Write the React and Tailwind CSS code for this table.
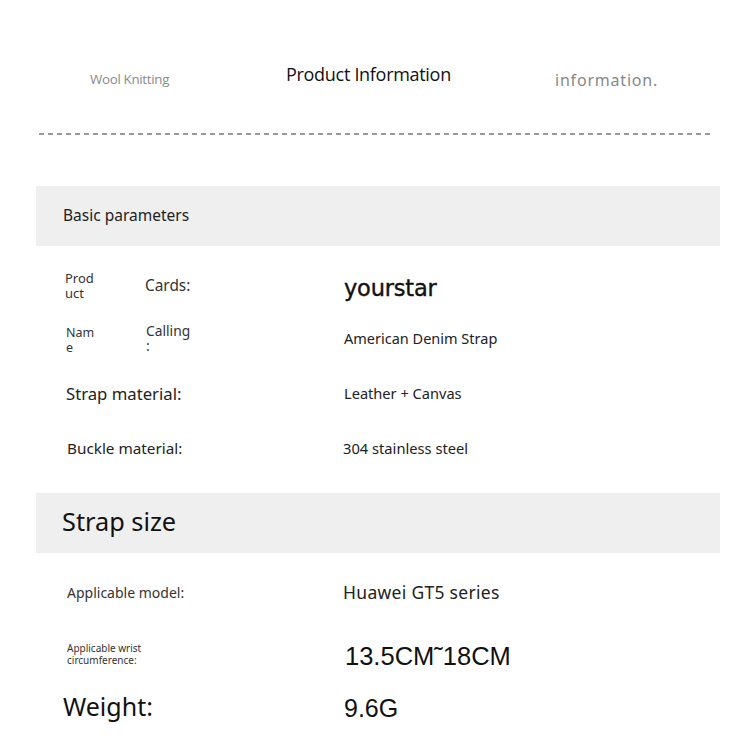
export default function App() {
  const sans = { fontFamily: '"Noto Sans", "Open Sans", sans-serif' };
  const arial = { fontFamily: '"Liberation Sans", Arial, sans-serif' };
  return (
    <div className="w-[750px] h-[739px] bg-white overflow-hidden text-[#222]" style={sans}>
      {/* header */}
      <div className="h-[186px] flex flex-col">
        <div className="flex pl-[90px] pt-[62px] h-[110px]">
          <div className="w-[196px] pt-[8px] text-[13.3px] text-[#8a8a8a] leading-[18px]" style={{ fontFamily: '"Open Sans", sans-serif', letterSpacing: '-0.3px' }}>Wool Knitting</div>
          <div className="w-[269px] text-[18px] text-[#111] leading-[24px]" style={{ fontFamily: '"Open Sans", sans-serif', letterSpacing: '-0.3px' }}>Product Information</div>
          <div className="pt-[8px] text-[16px] text-[#888] leading-[20px] tracking-[0.8px]">information.</div>
        </div>
        <div className="ml-[39px] mt-[23px] w-[673px] h-[2px] bg-[repeating-linear-gradient(90deg,#9a9a9a_0_5px,transparent_5px_9px)]" />
      </div>

      {/* Basic parameters */}
      <div className="ml-[36px] w-[684px] h-[60px] bg-[#efefef] flex items-center pl-[27px] text-[15.5px] text-[#222]">Basic parameters</div>

      <div className="ml-[36px] w-[684px]">
        <div className="h-[66px] flex items-center pt-[16px]">
          <div className="w-[109px] pl-[29px] text-[13px] leading-[15px] text-[#333] -mt-[2px]">Prod<br />uct</div>
          <div className="w-[199px] text-[15.4px] text-[#333] -mt-[2px]">Cards:</div>
          <div className="text-[22.5px] text-[#111] pt-[4px]" style={{ fontFamily: '"DejaVu Sans", sans-serif', letterSpacing: '-0.2px', WebkitTextStroke: '0.4px #111' }}>yourstar</div>
        </div>

        <div className="h-[54px] flex items-center">
          <div className="w-[110px] pl-[30px] text-[12.5px] leading-[15px] text-[#333] pt-[2px]">Nam<br />e</div>
          <div className="w-[198px] text-[13.8px] leading-[15px] text-[#333] -mt-[2px]">Calling<br />:</div>
          <div className="text-[14.5px] text-[#222]">American Denim Strap</div>
        </div>

        <div className="h-[56px] flex items-center">
          <div className="w-[308px] pl-[30px] text-[16.7px] text-[#222]">Strap material:</div>
          <div className="text-[14.6px] text-[#222]">Leather + Canvas</div>
        </div>

        <div className="h-[52px] flex items-center">
          <div className="w-[307px] pl-[31px] text-[15.3px] text-[#222]">Buckle material:</div>
          <div className="text-[14.7px] text-[#222]">304 stainless steel</div>
        </div>
      </div>

      <div className="h-[19px]" />

      {/* Strap size */}
      <div className="ml-[36px] w-[684px] h-[60px] bg-[#efefef] flex items-center pl-[26px] text-[25.3px] text-[#111] pb-[2px]">Strap size</div>

      <div className="ml-[36px] w-[684px]">
        <div className="h-[78px] flex items-center">
          <div className="w-[307px] pl-[31px] text-[14px] text-[#333]">Applicable model:</div>
          <div className="text-[17.5px] text-[#222] tracking-[0.3px]">Huawei GT5 series</div>
        </div>

        <div className="h-[50px] flex items-center">
          <div className="w-[309px] pl-[31px] text-[10px] leading-[12px] text-[#333] -mt-[4px]">Applicable wrist<br />circumference:</div>
          <div className="text-[25.5px] text-[#111]" style={arial}>13.5CM˜18CM</div>
        </div>

        <div className="h-[52px] flex items-center">
          <div className="w-[308px] pl-[27px] text-[25px] text-[#111]">Weight:</div>
          <div className="text-[25px] text-[#111] pt-[4px]" style={arial}>9.6G</div>
        </div>
      </div>
    </div>
  );
}
